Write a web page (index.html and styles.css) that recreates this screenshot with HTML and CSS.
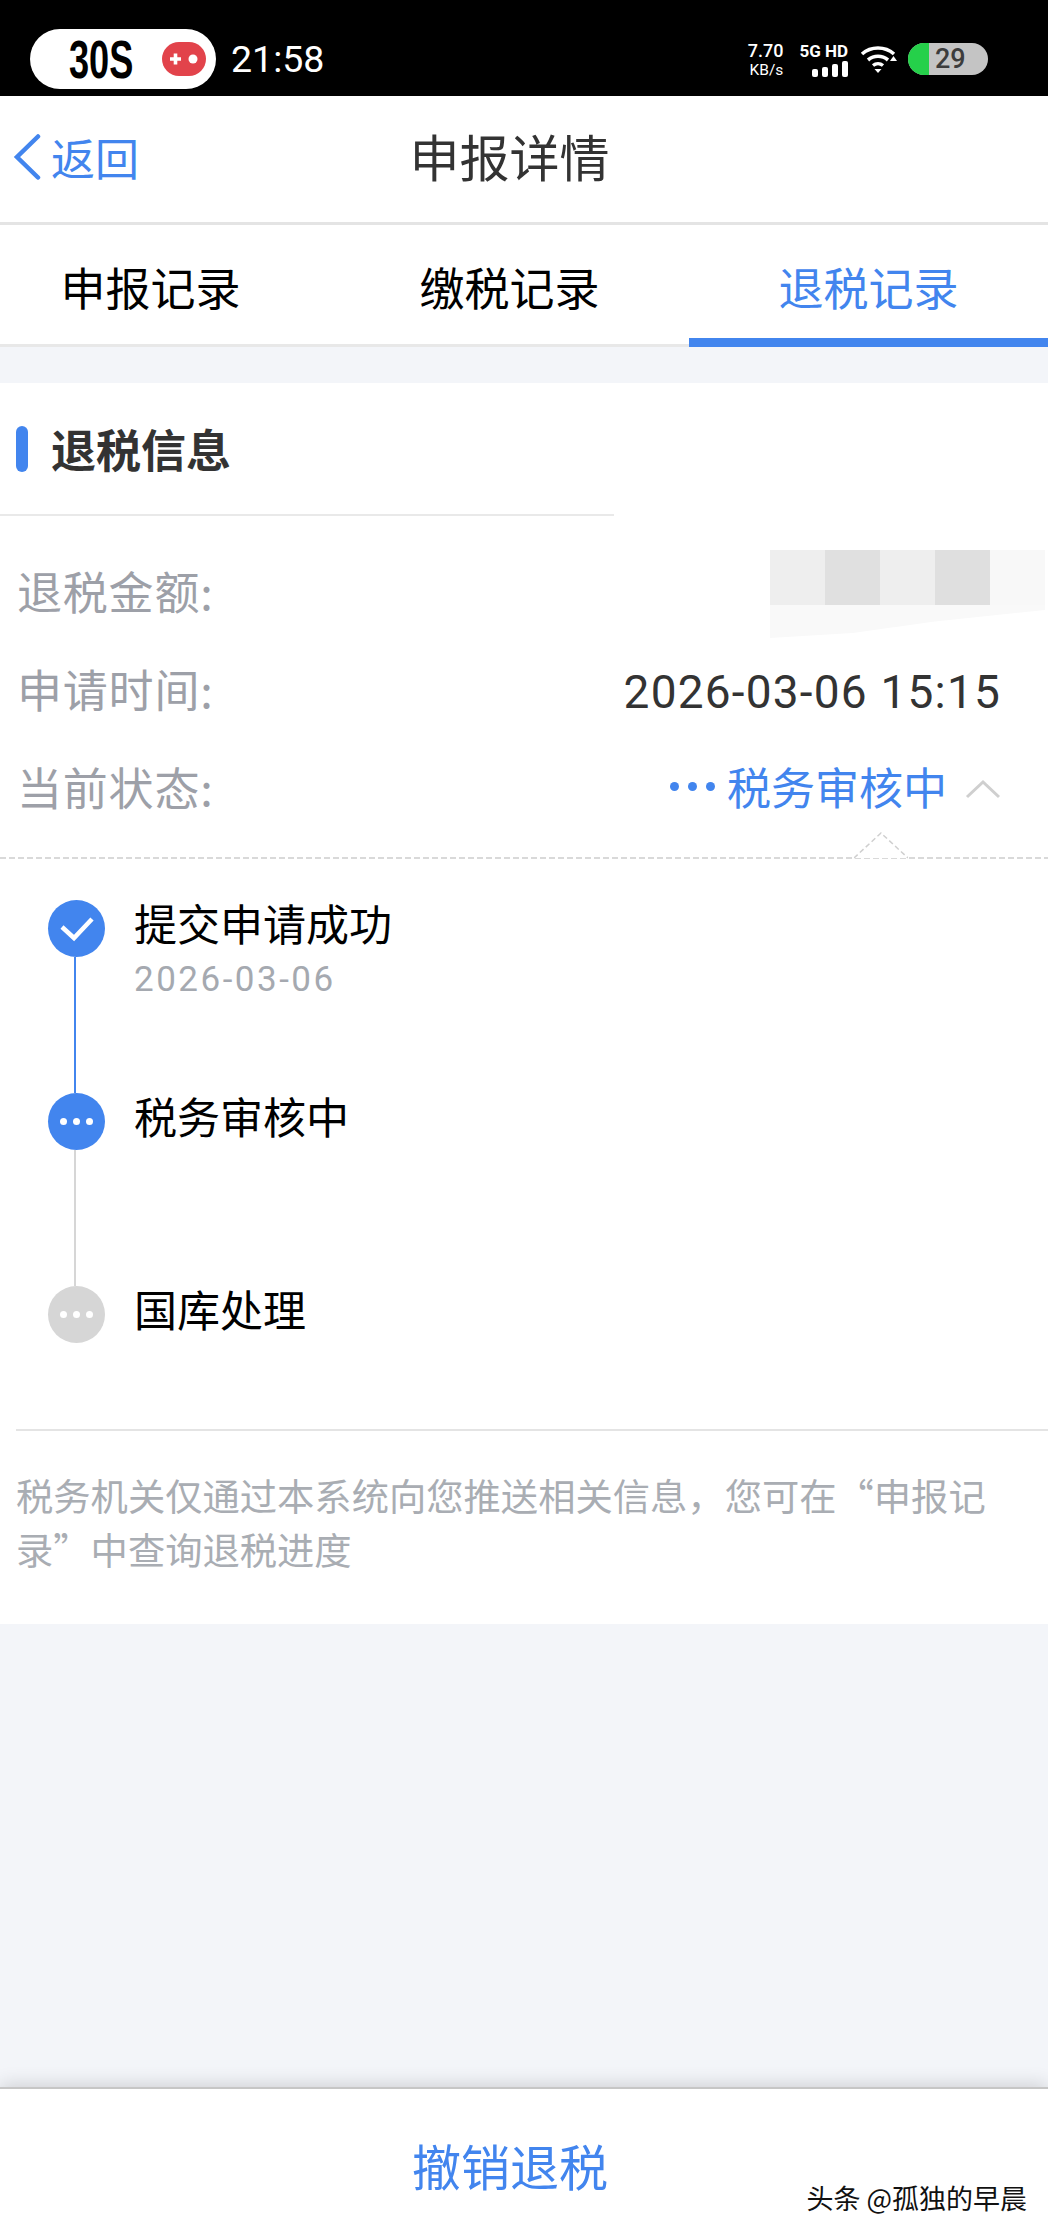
FILE: index.html
```html
<!DOCTYPE html>
<html>
<head>
	<title>申报详情</title>
	<meta charset="utf-8">
	<link rel="stylesheet" href="styles.css">
</head>
<body>
	<div class="statusBar">
		<div class="pill">
			<span class="pillText">30S</span>
			<svg class="gameIcon" width="44" height="34" viewBox="0 0 44 34">
				<rect x="0" y="0" width="44" height="34" rx="17" fill="#e2434b"/>
				<path d="M8 17h11M13.5 11.5v11" stroke="#fff" stroke-width="3.6" fill="none"/>
				<circle cx="31" cy="17" r="4.5" fill="#fff"/>
			</svg>
		</div>
		<span class="clock">21:58</span>
		<div class="statusRight">
			<div class="speed"><span>7.70</span><span class="speedUnit">KB/s</span></div>
			<div class="signal">
				<span class="netText">5G HD</span>
				<svg width="36" height="16" viewBox="0 0 36 16">
					<rect x="0" y="8" width="6" height="8" rx="2" fill="#fff"/>
					<rect x="10" y="6" width="6" height="10" rx="2" fill="#fff"/>
					<rect x="20" y="3" width="6" height="13" rx="2" fill="#fff"/>
					<rect x="30" y="0" width="6" height="16" rx="2" fill="#fff"/>
				</svg>
			</div>
			<svg class="wifi" width="37" height="30" viewBox="0 0 37 30">
				<path d="M2 10C11 2 25 2 34 10" stroke="#fff" stroke-width="3.6" fill="none"/>
				<path d="M8 16C14 11 22 11 28 16" stroke="#fff" stroke-width="3.6" fill="none"/>
				<path d="M13 21.5C16 19 20 19 23 21.5" stroke="#fff" stroke-width="3.4" fill="none"/>
				<path d="M14.5 25h7l-3.5 4z" fill="#fff"/>
				<path d="M30 17h7l-3.5-5z" fill="#fff"/>
			</svg>
			<div class="battery"><span class="batteryFill"></span><span class="batteryNum">29</span></div>
		</div>
	</div>

	<div class="navBar">
		<a class="back">
			<svg width="28" height="46" viewBox="0 0 28 46"><path d="M25 2.5L4 23l21 20.5" stroke="#4285ee" stroke-width="4.5" stroke-linecap="round" fill="none"/></svg>
			<span>返回</span>
		</a>
		<h1>申报详情</h1>
	</div>

	<div class="tabs">
		<div class="tab">申报记录</div>
		<div class="tab">缴税记录</div>
		<div class="tab active">退税记录</div>
	</div>

	<div class="card">
		<div class="cardTitle"><i></i><h2>退税信息</h2></div>
		<div class="titleLine"></div>
		<div class="infoRows">
			<div class="row">
				<span class="label">退税金额:</span>
				<div class="mosaic">
					<div class="mosaicTop">
						<b class="m1"></b><b class="m2"></b><b class="m1"></b><b class="m3"></b><b class="m4"></b>
					</div>
					<div class="mosaicSmear"></div>
				</div>
			</div>
			<div class="row">
				<span class="label">申请时间:</span>
				<span class="value">2026-03-06 15:15</span>
			</div>
			<div class="row">
				<span class="label">当前状态:</span>
				<span class="status">
					<span class="dots"><b></b><b></b><b></b></span>
					<span>税务审核中</span>
					<svg width="36" height="20" viewBox="0 0 36 20"><path d="M2 18L18 3l16 15" stroke="#cfcfcf" stroke-width="3" fill="none"/></svg>
				</span>
			</div>
		</div>
		<div class="dashLine">
			<svg class="notch" width="54" height="28" viewBox="0 0 54 28"><path d="M0 27L27 2l27 25" stroke="#cfcfcf" stroke-width="1.5" stroke-dasharray="5 3" fill="#fff"/></svg>
		</div>

		<ul class="steps">
			<li class="step done">
				<span class="node">
					<svg width="36" height="28" viewBox="0 0 36 28"><path d="M3 12l12 11L33 4" stroke="#fff" stroke-width="4.5" fill="none"/></svg>
				</span>
				<div class="stepText">
					<p>提交申请成功</p>
					<p class="stepDate">2026-03-06</p>
				</div>
			</li>
			<li class="step current">
				<span class="node"><b></b><b></b><b></b></span>
				<div class="stepText"><p>税务审核中</p></div>
			</li>
			<li class="step todo">
				<span class="node"><b></b><b></b><b></b></span>
				<div class="stepText"><p>国库处理</p></div>
			</li>
		</ul>

		<div class="note">税务机关仅通过本系统向您推送相关信息，您可在“申报记录”中查询退税进度</div>
	</div>

	<div class="spacer"></div>

	<div class="footer">
		<span class="cancel">撤销退税</span>
		<span class="watermark">头条 @孤独的早晨</span>
	</div>
</body>
</html>
```

FILE: styles.css
```css
*{
	padding: 0;
	margin: 0;
	box-sizing: border-box;
}
html, body{
	height: 2236px;
}
body{
	display: flex;
	flex-direction: column;
	background-color: #f3f5f9;
	font-family: "Noto Sans CJK SC", "Noto Sans", sans-serif;
	color: #000;
	overflow: hidden;
}

/* status bar */
.statusBar{
	flex: none;
	display: flex;
	align-items: center;
	height: 96px;
	padding: 22px 0 0 30px;
	background-color: #000;
	color: #fff;
}
.pill{
	display: flex;
	align-items: center;
	width: 186px;
	height: 60px;
	padding-left: 39px;
	border-radius: 30px;
	background-color: #fff;
}
.pillText{
	flex: none;
	width: 93px;
	color: #000;
	font: bold 54px/60px "Liberation Sans", sans-serif;
	transform: scaleX(0.67);
	transform-origin: left center;
	white-space: nowrap;
}
.gameIcon{
	flex: none;
}
.clock{
	margin-left: 15px;
	font: 37.5px/60px "Roboto", sans-serif;
}
.statusRight{
	display: flex;
	align-items: center;
	margin-left: auto;
	margin-right: 60px;
}
.speed{
	display: flex;
	flex-direction: column;
	align-items: flex-end;
	font: 500 18px/21px "Roboto", sans-serif;
}
.speedUnit{
	font-size: 15.5px;
	font-weight: 400;
	line-height: 18px;
}
.signal{
	display: flex;
	flex-direction: column;
	align-items: flex-end;
	margin-left: 16px;
}
.netText{
	font: bold 17px/20px "Roboto", sans-serif;
	white-space: nowrap;
}
.wifi{
	margin-left: 12px;
}
.battery{
	display: flex;
	width: 80px;
	height: 32px;
	margin-left: 11px;
	border-radius: 16px;
	background-color: #c4c4c4;
	overflow: hidden;
}
.batteryFill{
	width: 21px;
	background-color: #25d04a;
}
.batteryNum{
	margin-left: 6px;
	color: #3c3c3c;
	font: 500 27px/32px "Roboto", sans-serif;
}

/* nav */
.navBar{
	flex: none;
	display: grid;
	grid-template-columns: 1fr auto 1fr;
	align-items: center;
	height: 129px;
	padding: 0 42px 8px 13px;
	border-bottom: 3px solid #e4e4e4;
	background-color: #fff;
}
.navBar h1{
	font-size: 50px;
	font-weight: 400;
	color: #333;
}
.back{
	display: flex;
	align-items: center;
	gap: 10px;
	margin-top: 3px;
	color: #4285ee;
	font-size: 44px;
}

/* tabs */
.tabs{
	flex: none;
	display: flex;
	height: 122px;
	margin-left: -29px;
	border-bottom: 3px solid #e8e8e8;
	background-color: #fff;
}
.tab{
	flex: 0 0 359px;
	height: 122px;
	text-align: center;
	font-size: 45px;
	line-height: 124px;
}
.tab.active{
	border-bottom: 9px solid #4285ee;
	color: #4285ee;
}

/* card */
.card{
	flex: none;
	margin-top: 36px;
	background-color: #fff;
}
.cardTitle{
	display: flex;
	align-items: center;
	height: 131px;
	padding: 0 16px;
}
.cardTitle i{
	width: 12px;
	height: 46px;
	border-radius: 6px;
	background-color: #4285ee;
}
.cardTitle h2{
	margin-left: 23px;
	font-size: 45px;
	font-weight: 700;
	color: #333;
}
.titleLine{
	width: 614px;
	height: 2px;
	background-color: #e9e9e9;
}
.infoRows{
	padding: 25px 47px 0 17px;
}
.row{
	display: flex;
	align-items: center;
	justify-content: space-between;
	height: 98px;
}
.label{
	color: #9da0a8;
	letter-spacing: 0.8px;
	font-size: 45px;
}
.value{
	padding-top: 8px;
	color: #333;
	letter-spacing: 1.2px;
	font: 46px/60px "Roboto", sans-serif;
}
.mosaic{
	margin-top: 8px;
	margin-right: -44px;
}
.mosaicTop{
	display: flex;
}
.mosaicTop b{
	width: 55px;
	height: 55px;
}
.mosaicSmear{
	height: 33px;
	background-color: #f9f9f9;
	clip-path: polygon(0 0, 100% 0, 100% 5px, 60% 50%, 30% 85%, 0 100%);
}
.m1{
	background-color: #eeeeee;
}
.m2{
	background-color: #e0e0e0;
}
.m3{
	background-color: #dfdfdf;
}
.m4{
	background-color: #f8f8f8;
}
.status{
	display: flex;
	align-items: center;
	color: #4285ee;
	font-size: 44px;
}
.status svg{
	margin-left: 18px;
	margin-top: 6px;
}
.dots{
	display: flex;
	gap: 9px;
	margin-right: 12px;
}
.dots b{
	width: 9px;
	height: 9px;
	border-radius: 50%;
	background-color: #4285ee;
}
.dashLine{
	position: relative;
	height: 2px;
	margin-top: 22px;
	background: repeating-linear-gradient(90deg, #d9d9d9 0, #d9d9d9 6px, transparent 6px, transparent 9px);
}
.notch{
	position: absolute;
	right: 140px;
	top: -26px;
}

/* steps */
.steps{
	list-style: none;
	padding: 41px 0 0 48px;
}
.step{
	position: relative;
	display: flex;
	height: 193px;
}
.step:last-child{
	height: 143px;
}
.node{
	flex: none;
	display: flex;
	align-items: center;
	justify-content: center;
	gap: 6px;
	width: 57px;
	height: 57px;
	border-radius: 50%;
	background-color: #4285ee;
}
.node b{
	width: 7px;
	height: 7px;
	border-radius: 50%;
	background-color: #fff;
}
.step.todo .node{
	background-color: #d6d6d6;
}
.step::after{
	content: "";
	position: absolute;
	left: 26px;
	top: 57px;
	width: 2px;
	height: 136px;
	background-color: #d6d6d6;
}
.step.done::after{
	background-color: #4285ee;
}
.step:last-child::after{
	display: none;
}
.stepText{
	margin-left: 29px;
	margin-top: -4px;
	font-size: 43px;
	line-height: 53px;
}
.stepDate{
	margin-top: 6px;
	color: #a5a9b0;
	letter-spacing: 2.5px;
	font: 35px/50px "Roboto", sans-serif;
}

.note{
	margin-left: 16px;
	padding: 37px 50px 48px 0;
	border-top: 2px solid #e4e4e4;
	color: #a9adb3;
	font-size: 37.3px;
	line-height: 54px;
}

.spacer{
	flex: 1;
}

/* bottom button */
.footer{
	flex: none;
	position: relative;
	display: flex;
	align-items: center;
	justify-content: center;
	height: 149px;
	padding: 4px 28px 0 0;
	border-top: 2px solid #c6c6c6;
	background-color: #fff;
	box-shadow: 0 -2px 18px rgba(0, 0, 0, .16);
}
.cancel{
	color: #4285ee;
	font-size: 49px;
}
.watermark{
	position: absolute;
	right: 21px;
	top: 92px;
	font-size: 27px;
	line-height: 34px;
	color: #111;
}
```
